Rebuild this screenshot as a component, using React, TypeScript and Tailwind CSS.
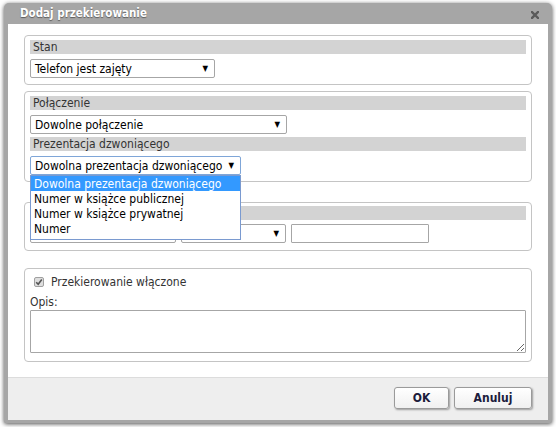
import React from "react";

function Select({ text, w, focused }: { text: string; w: number; focused?: boolean }) {
  return (
    <div
      style={{ width: w }}
      className={
        "h-[19px] rounded-[2px] bg-white flex items-center justify-between pl-[4px] pr-[6px] text-[12px] text-black border " +
        (focused ? "border-[#7fa6d8]" : "border-[#a6a6a6]")
      }
    >
      <span className="whitespace-nowrap leading-none">{text}</span>
      <span className="text-[8px] leading-none">▼</span>
    </div>
  );
}

function Bar({ text }: { text: string }) {
  return (
    <div className="h-[14px] bg-[#d3d3d3] flex items-center pl-[3px] text-[12px] text-[#333] leading-none">
      {text}
    </div>
  );
}

export default function App() {
  return (
    <div className="w-[556px] h-[427px] bg-white pl-[4px] pt-[3px] font-['DejaVu_Sans',sans-serif] font-stretch-condensed">
      <div className="w-[548px] h-[420px] bg-[#a6a6a6] rounded-t-[5px] rounded-b-[2px] shadow-[0_1px_4px_rgba(0,0,0,0.7)] flex flex-col">
        {/* title */}
        <div className="h-[21px] flex items-center justify-between pl-[16px] pr-[13px]">
          <span className="text-white font-bold text-[11.5px] leading-none [text-shadow:0_1px_1px_rgba(0,0,0,0.45)]">
            Dodaj przekierowanie
          </span>
          <svg width="8" height="8" viewBox="0 0 8 8" className="mt-[2px]">
            <path d="M1 1 L7 7 M7 1 L1 7" stroke="#5a5a5a" strokeWidth="2.4" strokeLinecap="square" />
          </svg>
        </div>
        {/* body */}
        <div className="mx-[4px] h-[354px] bg-white border-b border-[#dcdcdc] pt-[11px] px-[16px] flex flex-col">
          {/* box 1 */}
          <div className="border border-[#c4c4c4] rounded-[4px] pt-[4px] pb-[6px] px-[5px] flex flex-col">
            <Bar text="Stan" />
            <div className="mt-[5px]">
              <Select text="Telefon jest zajęty" w={185} />
            </div>
          </div>
          {/* box 2 */}
          <div className="mt-[6px] border border-[#c4c4c4] rounded-[4px] pt-[4px] pb-[6px] px-[5px] flex flex-col">
            <Bar text="Połączenie" />
            <div className="mt-[5px]">
              <Select text="Dowolne połączenie" w={257} />
            </div>
            <div className="mt-[3px]">
              <Bar text="Prezentacja dzwoniącego" />
            </div>
            <div className="mt-[5px] relative w-[211px]">
              <Select text="Dowolna prezentacja dzwoniącego" w={211} focused />
              <div className="absolute left-0 top-[19px] w-[211px] z-10 bg-white border border-[#7a9ad0] pb-[3px] text-[12px] text-black">
                <div className="h-[15px] bg-[#3399ff] text-white flex items-center pl-[3px] leading-none">
                  Dowolna prezentacja dzwoniącego
                </div>
                <div className="h-[15px] flex items-center pl-[3px] leading-none">Numer w książce publicznej</div>
                <div className="h-[15px] flex items-center pl-[3px] leading-none">Numer w książce prywatnej</div>
                <div className="h-[15px] flex items-center pl-[3px] leading-none">Numer</div>
              </div>
            </div>
          </div>
          {/* box 3 */}
          <div className="mt-[20px] border border-[#c4c4c4] rounded-[4px] pt-[3px] pb-[7px] px-[5px] flex flex-col">
            <Bar text="" />
            <div className="mt-[4px] flex gap-[5px]">
              <Select text="" w={146} />
              <Select text="" w={105} />
              <div className="w-[138px] h-[19px] border border-[#a6a6a6] rounded-[1px] bg-white" />
            </div>
          </div>
          {/* box 4 */}
          <div className="mt-[17px] border border-[#c4c4c4] rounded-[4px] pt-[5px] pb-[8px] px-[5px] flex flex-col">
            <div className="h-[16px] flex items-center pl-[4px] gap-[7px]">
              <div className="w-[10px] h-[10px] border border-[#a0a0a0] rounded-[2px] bg-[#dedede] flex items-center justify-center">
                <svg width="8" height="8" viewBox="0 0 8 8">
                  <path d="M1.2 4.2 L3.2 6.2 L6.8 1.6" stroke="#555" strokeWidth="1.6" fill="none" />
                </svg>
              </div>
              <span className="text-[12px] text-[#333] leading-none">Przekierowanie włączone</span>
            </div>
            <div className="h-[16px] mt-[4px] flex items-center text-[12px] text-[#333] leading-none">Opis:</div>
            <textarea
              readOnly
              className="block w-full h-[43px] border border-[#a6a6a6] rounded-[1px] bg-white resize-y outline-none"
            />
          </div>
        </div>
        {/* footer */}
        <div className="mx-[4px] h-[42px] bg-[#eeeeee] flex justify-end items-start pt-[9px] pr-[16px] gap-[5px]">
          <div className="w-[55px] h-[22px] rounded-[3px] border border-[#9a9a9a] bg-gradient-to-b from-white to-[#f0f0f0] shadow-[1px_1px_2px_rgba(0,0,0,0.35)] flex items-center justify-center font-bold text-[12px] text-[#1c1c3c] leading-none">
            OK
          </div>
          <div className="w-[78px] h-[22px] rounded-[3px] border border-[#9a9a9a] bg-gradient-to-b from-white to-[#f0f0f0] shadow-[1px_1px_2px_rgba(0,0,0,0.35)] flex items-center justify-center font-bold text-[12px] text-[#1c1c3c] leading-none">
            Anuluj
          </div>
        </div>
      </div>
    </div>
  );
}
